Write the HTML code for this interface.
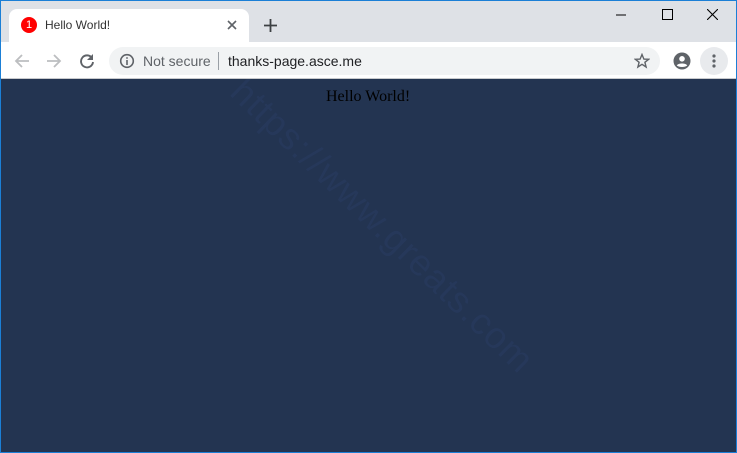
<!DOCTYPE html>
<html><head><style>
*{margin:0;padding:0;box-sizing:border-box}
body{width:737px;height:453px;overflow:hidden;font-family:"Liberation Sans",sans-serif;position:relative;background:#233451}
.frame{position:absolute;left:0;top:0;width:737px;height:453px;border:1px solid #1b7fd6;z-index:10;pointer-events:none}
.title{position:absolute;left:0;top:0;width:737px;height:42px;background:#dee1e6}
.tab{position:absolute;left:9px;top:9px;width:240px;height:34px;background:#fff;border-radius:8px 8px 0 0}
.tb{position:absolute;left:0;top:42px;width:737px;height:37px;background:#fff;border-bottom:1px solid #c8cacd}
.omni{position:absolute;left:109px;top:47px;width:551px;height:28px;background:#f1f3f4;border-radius:14px}
.abs{position:absolute}
.wm{position:absolute;left:180px;top:205px;transform:rotate(44deg);font-size:37px;color:#26385a;white-space:nowrap;letter-spacing:1px}
</style></head><body>
<div class="wm">https://www.greats.com</div>
<div class="title"></div>
<div class="tab"></div>
<div class="abs" style="left:21px;top:17px;width:16px;height:16px;border-radius:50%;background:#f00;color:#fff;font-size:11px;text-align:center;line-height:16px">1</div>
<div class="abs" style="left:45px;top:18px;font-size:12px;color:#333">Hello World!</div>
<svg class="abs" style="left:227px;top:20px" width="10" height="10"><path d="M1 1L9 9M9 1L1 9" stroke="#5f6368" stroke-width="1.6"/></svg>
<svg class="abs" style="left:264px;top:19px" width="13" height="13"><path d="M6.5 0V13M0 6.5H13" stroke="#3c4043" stroke-width="1.8"/></svg>
<svg class="abs" style="left:616px;top:14px" width="10" height="2"><path d="M0 1H10" stroke="#000"/></svg>
<svg class="abs" style="left:662px;top:9px" width="11" height="11"><rect x=".5" y=".5" width="10" height="10" fill="none" stroke="#000"/></svg>
<svg class="abs" style="left:707px;top:9px" width="11" height="11"><path d="M0 0L11 11M11 0L0 11" stroke="#000" stroke-width="1.1"/></svg>
<div class="tb"></div>
<svg class="abs" style="left:14px;top:53px" width="16" height="16"><path d="M15 8H2M8 2L2 8L8 14" stroke="#bcbec0" stroke-width="1.8" fill="none"/></svg>
<svg class="abs" style="left:46px;top:53px" width="16" height="16"><path d="M1 8H14M8 2L14 8L8 14" stroke="#bcbec0" stroke-width="1.8" fill="none"/></svg>
<svg class="abs" style="left:79px;top:53px" width="16" height="16"><path d="M13 5A6 6 0 1 0 14 9" stroke="#5f6368" stroke-width="1.9" fill="none"/><path d="M14 1V7H8Z" fill="#5f6368"/></svg>
<div class="omni"></div>
<svg class="abs" style="left:119px;top:53px" width="16" height="16"><circle cx="8" cy="8" r="6.3" stroke="#5f6368" stroke-width="1.6" fill="none"/><path d="M8 7V12M8 4.3V5.8" stroke="#5f6368" stroke-width="1.6"/></svg>
<div class="abs" style="left:143px;top:53px;font-size:14px;color:#5f6368">Not secure</div>
<div class="abs" style="left:218px;top:52px;width:1px;height:18px;background:#9aa0a6"></div>
<div class="abs" style="left:228px;top:53px;font-size:14px;color:#202124">thanks-page.asce.me</div>
<svg class="abs" style="left:634px;top:53px" width="16" height="16"><path d="M8 1.5L9.9 6.1L14.6 6.3L10.9 9.3L12.1 14L8 11.3L3.9 14L5.1 9.3L1.4 6.3L6.1 6.1Z" fill="none" stroke="#5f6368" stroke-width="1.4"/></svg>
<svg class="abs" style="left:673px;top:52px" width="18" height="18"><circle cx="9" cy="9" r="8.5" fill="#5f6368"/><circle cx="9" cy="6.8" r="2.8" fill="#fff"/><path d="M3.8 13.5C5 10.8 13 10.8 14.2 13.5C12 15.5 6 15.5 3.8 13.5Z" fill="#fff"/></svg>
<div class="abs" style="left:700px;top:47px;width:28px;height:28px;border-radius:50%;background:#e8eaed"></div>
<svg class="abs" style="left:712px;top:54px" width="4" height="14"><circle cx="2" cy="2" r="1.6" fill="#5f6368"/><circle cx="2" cy="7" r="1.6" fill="#5f6368"/><circle cx="2" cy="12" r="1.6" fill="#5f6368"/></svg>
<div class="abs" style="left:326px;top:88px;font-family:'Liberation Serif',serif;font-size:16px;color:#000">Hello World!</div>
<div class="frame"></div>
</body></html>
